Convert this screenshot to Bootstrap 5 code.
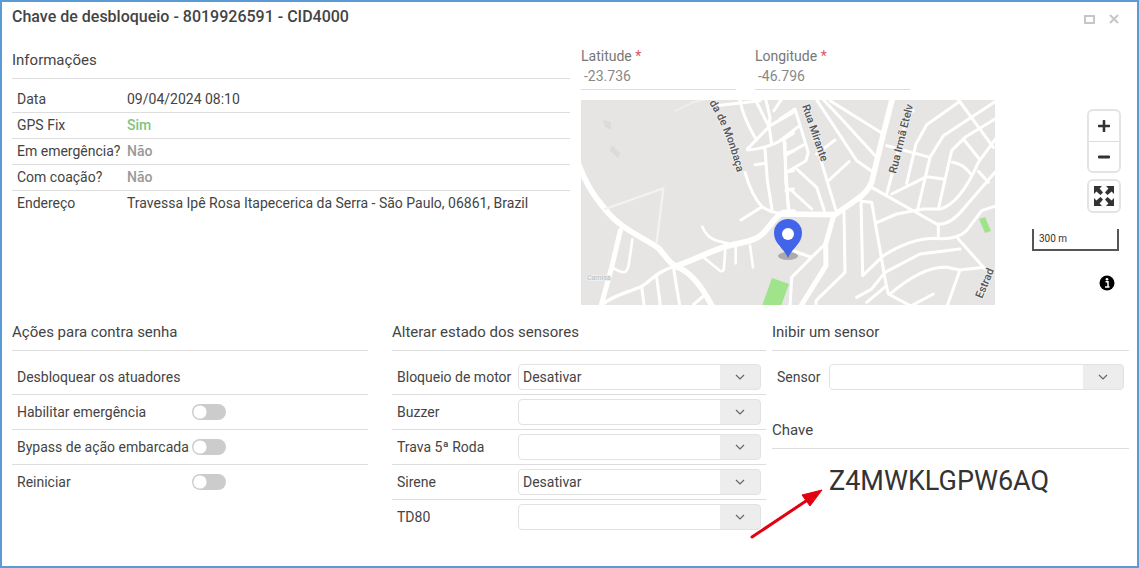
<!DOCTYPE html>
<html lang="pt-BR">
<head>
<meta charset="utf-8">
<meta name="viewport" content="width=device-width, initial-scale=1">
<title>Chave de desbloqueio</title>
<link href="https://cdn.jsdelivr.net/npm/bootstrap@5.3.0/dist/css/bootstrap.min.css" rel="stylesheet">
<style>
  body { font: 14px/20px Roboto, "Liberation Sans", sans-serif; color: #444; background: #fff; }
  .window { border: 2px solid #5b9bd5; padding: 0 8px 16px 10px; min-height: 100vh; }
  .window-title { font-size: 16px; line-height: 30px; font-weight: 500; color: #444; }
  .window-tools { gap: 13px; padding: 3px 10px 0 0; }
  .window-tools button { width: 11px; height: 28px; color: #c6c6c6; }
  .plain-btn { border: 0; padding: 0; background: none; display: flex; align-items: center; justify-content: center; }
  .top-area { display: grid; grid-template-columns: 569fr 548fr; min-height: 289px; }
  .bottom-area { display: grid; grid-template-columns: 380fr 380fr 357fr; }
  .col-actions { padding-right: 24px; }
  .col-sensors { padding-right: 6px; }
  .section-title { font-size: 15px; line-height: 20px; font-weight: 400; color: #444; margin: 0; padding-bottom: 8px; border-bottom: 1px solid #ddd; }
  .info-area { padding: 17px 11px 0 0; }
  .info-table { width: 100%; margin-top: 8px; }
  .info-table th { width: 115px; font-weight: 400; padding: 2px 0 3px 5px; white-space: nowrap; }
  .info-table td { padding: 2px 0 3px; }
  .info-table tr + tr { border-top: 1px solid #ddd; }
  .flag-text { font-weight: 500; color: #999; }
  .flag-on { color: #7cc47f; }
  .coord-fields { gap: 19px; padding-top: 13px; }
  .coord-field { width: 155px; }
  .coord-field label { display: block; color: #777; line-height: 20px; }
  .coord-field input { width: 100%; height: 24px; border: 0; border-bottom: 1px solid #ddd; padding: 0 3px 3px; color: #888; background: none; border-radius: 0; }
  .required-mark { color: #d9536a; }
  .map-row { margin-top: 10px; }
  .map-view { flex: 1 1 0; min-width: 0; height: 205px; display: block; background: #e6e5e3; }
  .map-tools { width: 134px; padding: 9px 8px 0 0; }
  .tool-group { width: 34px; border: 2px solid #e4e4e4; border-radius: 6px; overflow: hidden; margin-bottom: 6px; }
  .tool-group button { width: 30px; height: 30px; color: #333; }
  .tool-group button + button { border-top: 1px solid #ddd; }
  .scale-bar { width: 87px; height: 22px; border: 2px solid #555; border-top: 0; font-size: 10px; line-height: 20px; padding-left: 5px; margin: 10px 2px 24px 0; color: #333; }
  .info-btn { margin-right: 6px; color: #000; }
  .form-line { display: flex; align-items: center; height: 35px; padding: 0 5px; }
  .form-line + .form-line { border-top: 1px solid #ddd; }
  .form-lines { padding-top: 8px; }
  .actions-label { width: 175px; }
  .sensors-label { width: 121px; }
  .sensor-label { width: 52px; }
  .form-switch .toggle { width: 34px; height: 16px; margin: 0; border: 0; background-color: #ccc; display: block; cursor: pointer;
    --bs-form-switch-bg: url("data:image/svg+xml,%3csvg xmlns='http://www.w3.org/2000/svg' viewBox='-4 -4 8 8'%3e%3ccircle r='3.3' fill='%23fff'/%3e%3c/svg%3e"); }
  .picker.form-select { flex: 1 1 0; min-width: 0; height: 26px; border: 1px solid #e2e2e2; border-radius: 4px; padding: 0 44px 0 4px; font-size: 14px; line-height: 20px; color: #444;
    background-image: url("data:image/svg+xml,%3csvg xmlns='http://www.w3.org/2000/svg' viewBox='0 0 10 6'%3e%3cpath d='M1 1l4 4 4-4' fill='none' stroke='%23666' stroke-width='1.2'/%3e%3c/svg%3e"), linear-gradient(#ededed, #ededed);
    background-size: 10px 6px, 40px 100%; background-position: right 15px center, right center; background-repeat: no-repeat; }
  .key-title { margin-top: 26px; }
  .key-line { position: relative; padding: 14px 0 0 57px; }
  .key-value { font-size: 27px; line-height: 36px; color: #333; }
  .key-arrow { position: absolute; left: -23px; top: 38px; }
</style>
</head>
<body>
<main class="window">
  <header class="d-flex justify-content-between">
    <h1 class="window-title mb-0">Chave de desbloqueio - 8019926591 - CID4000</h1>
    <div class="window-tools d-flex">
      <button type="button" class="plain-btn" aria-label="Maximizar"><svg width="11" height="9" viewBox="0 0 11 9"><path d="M1 1h9v7H1z" fill="none" stroke="currentColor" stroke-width="2"/></svg></button>
      <button type="button" class="plain-btn" aria-label="Fechar"><svg width="10" height="10" viewBox="0 0 10 10"><path d="M1 1l8 8M9 1L1 9" stroke="currentColor" stroke-width="2"/></svg></button>
    </div>
  </header>

  <div class="top-area">
    <section class="info-area">
      <h2 class="section-title">Informações</h2>
      <table class="info-table">
        <tbody>
          <tr><th scope="row">Data</th><td>09/04/2024 08:10</td></tr>
          <tr><th scope="row">GPS Fix</th><td><span class="flag-text flag-on">Sim</span></td></tr>
          <tr><th scope="row">Em emergência?</th><td><span class="flag-text">Não</span></td></tr>
          <tr><th scope="row">Com coação?</th><td><span class="flag-text">Não</span></td></tr>
          <tr><th scope="row">Endereço</th><td>Travessa Ipê Rosa Itapecerica da Serra - São Paulo, 06861, Brazil</td></tr>
        </tbody>
      </table>
    </section>

    <section>
      <div class="coord-fields d-flex">
        <div class="coord-field"><label for="lat">Latitude <span class="required-mark">*</span></label><input id="lat" type="text" value="-23.736" readonly></div>
        <div class="coord-field"><label for="lng">Longitude <span class="required-mark">*</span></label><input id="lng" type="text" value="-46.796" readonly></div>
      </div>
      <div class="map-row d-flex">
        <svg class="map-view" viewBox="0 0 414 205" preserveAspectRatio="xMidYMid slice" role="img" aria-label="Mapa">
          <rect width="414" height="205" fill="#e6e5e3"/>
          <path d="M22 20l8 2 0 8-6-3zM31 45l8 8-2 5-8-7z" fill="#dddad8"/>
          <!-- west half -->
          <g transform="translate(-11 -6) scale(.33333)" fill="none" stroke="#fff" stroke-width="9" stroke-linejoin="round" stroke-linecap="round">
            <path d="M20 195C40 255 65 300 105 345C150 405 220 430 265 462C290 490 295 505 318 518C360 530 395 575 428 640" stroke-width="17"/>
            <path d="M318 516C370 500 410 475 470 457C510 445 550 445 575 422C600 400 610 370 640 356L670 354" stroke-width="17"/>
            <path d="M151 410L125 520L92 640" stroke-width="15"/>
            <path d="M318 516C260 530 240 565 212 578C160 600 130 605 95 632" stroke-width="10"/>
            <path d="M187 436L178 500Q174 540 155 534Q138 528 130 522M397 398Q410 430 440 440L480 450M403 492L450 530Q462 535 462 520L466 465M497 460V508M540 455L549 520" stroke-width="8"/>
            <path d="M215 578L223 640M260 550L272 640M311 525L330 640M370 632L408 600" stroke-width="9"/>
            <path d="M105 345L280 283L260 445" stroke="#f3f2f0" stroke-width="7"/>
            <path d="M315 50L370 25L410 15" stroke="#f0efed" stroke-width="5"/>
            <path d="M525 235C535 270 550 310 576 338Q600 355 640 360M513 378L576 338"/>
            <path d="M510 20Q520 70 552 125L560 138M430 36L505 28L570 20M555 15L598 100L605 150M587 15L600 70L596 105M612 50L635 15M670 55L600 95L532 165M532 168Q600 165 670 118M585 165L592 260L606 345M555 212L585 208M645 145L647 260L657 350M645 178L670 172M648 235L670 230M648 290L670 285"/>
          </g>
          <!-- east half -->
          <g transform="translate(199 -6) scale(.33333)" fill="none" stroke="#fff" stroke-width="9" stroke-linejoin="round" stroke-linecap="round">
            <path d="M0 360L165 362L232 315Q262 295 275 265L305 140L338 10" stroke-width="17"/>
            <path d="M162 362L137 450L138 515L60 640" stroke-width="15"/>
            <path d="M0 75L45 45L85 175L78 200L20 235M0 140L20 125L55 98M12 135L25 345M15 185L75 150M50 225L110 280L133 350M30 285L95 345"/>
            <path d="M105 10L230 200L280 235M128 15L180 70L290 190M150 20L310 120M110 180L165 138M148 258L207 203M120 190L168 350"/>
            <path d="M50 475L95 490L0 455M137 448L35 550L30 640M192 355L195 535L108 620V640"/>
            <path d="M243 318L248 545L310 485M243 322L275 325L318 570L325 600L400 640M275 280L470 390Q510 395 550 345L645 235M292 385L350 360L430 345H480Q540 330 595 205L650 130"/>
            <path d="M320 155L450 190L412 350M450 190L490 125L650 20M320 300L335 245L382 65L400 50M335 300L440 248L490 255M380 268L408 150L440 92L540 22M475 345L515 170L555 130L645 75M550 135L598 195M518 205Q550 210 572 240M595 232L625 265M530 10L640 160"/>
            <path d="M230 610L275 585L315 535L420 480L540 465M310 485Q390 435 460 433Q530 440 560 410L605 350L650 335M535 435L615 525M475 390V430M260 625L320 575M330 600Q430 515 500 520L540 528L610 520M540 528L500 640M385 640L460 600"/>
          </g>
          <path d="M191 178l17 6-8 22h-19z" fill="#9fe38b"/>
          <path d="M398 119l6-2 6 14-6 2z" fill="#9fe38b"/>
          <path id="street" d="M128 3Q146 30 158 80" fill="none"/>
          <g font-family="Roboto, sans-serif" fill="#555" stroke="#eee" stroke-width="2" paint-order="stroke" font-size="11" font-weight="500">
            <text><textPath href="#street">da de Monbaça</textPath></text>
            <text transform="translate(221 6) rotate(71)">Rua Mirante</text>
            <text transform="translate(315 74) rotate(-76)">Rua Irmã Etelv</text>
            <text transform="translate(401 199) rotate(-67)">Estrad</text>
            <text x="6" y="180" font-size="7" font-weight="400" fill="#bbb">Camisa</text>
          </g>
          <ellipse cx="207" cy="156" rx="10" ry="4" fill="#555" opacity=".4"/>
          <path d="M207 158C203 148 193 144 193 133a14 14 0 0 1 28 0C221 144 211 148 207 158z" fill="#4264e8"/>
          <circle cx="207" cy="134" r="6" fill="#fff"/>
        </svg>
        <div class="map-tools d-flex flex-column align-items-end">
          <div class="tool-group">
            <button type="button" class="plain-btn" aria-label="Aproximar"><svg width="12" height="12" viewBox="0 0 12 12"><path d="M6 1v10M1 6h10" stroke="currentColor" stroke-width="2.6" stroke-linecap="round"/></svg></button>
            <button type="button" class="plain-btn" aria-label="Afastar"><svg width="12" height="12" viewBox="0 0 12 12"><path d="M1 6h10" stroke="currentColor" stroke-width="2.8" stroke-linecap="round"/></svg></button>
          </div>
          <div class="tool-group">
            <button type="button" class="plain-btn" aria-label="Tela cheia"><svg width="20" height="20" viewBox="0 0 20 20" fill="currentColor"><path id="corner" d="M0 0h8L5.600 2.400 9 6.500 6.500 9 2.400 5.600 0 8z"/><use href="#corner" transform="rotate(90 10 10)"/><use href="#corner" transform="rotate(180 10 10)"/><use href="#corner" transform="rotate(270 10 10)"/></svg></button>
          </div>
          <div class="scale-bar">300 m</div>
          <button type="button" class="plain-btn info-btn" aria-label="Informações do mapa"><svg width="16" height="16" viewBox="0 0 16 16"><circle cx="8" cy="8" r="7.500" fill="currentColor"/><path d="M6.500 6.800h2.500v5M6 12h4.500" fill="none" stroke="#fff" stroke-width="1.500"/><circle cx="8" cy="4.200" r="1.300" fill="#fff"/></svg></button>
        </div>
      </div>
    </section>
  </div>

  <div class="bottom-area">
    <section class="col-actions">
      <h2 class="section-title">Ações para contra senha</h2>
      <div class="form-lines">
        <div class="form-line">Desbloquear os atuadores</div>
        <div class="form-line"><label class="actions-label" for="a1">Habilitar emergência</label><div class="form-switch p-0 m-0"><input class="form-check-input toggle" type="checkbox" role="switch" id="a1"></div></div>
        <div class="form-line"><label class="actions-label" for="a2">Bypass de ação embarcada</label><div class="form-switch p-0 m-0"><input class="form-check-input toggle" type="checkbox" role="switch" id="a2"></div></div>
        <div class="form-line"><label class="actions-label" for="a3">Reiniciar</label><div class="form-switch p-0 m-0"><input class="form-check-input toggle" type="checkbox" role="switch" id="a3"></div></div>
      </div>
    </section>

    <section class="col-sensors">
      <h2 class="section-title">Alterar estado dos sensores</h2>
      <div class="form-lines">
        <div class="form-line"><label class="sensors-label" for="s1">Bloqueio de motor</label><select class="form-select picker" id="s1"><option>Desativar</option></select></div>
        <div class="form-line"><label class="sensors-label" for="s2">Buzzer</label><select class="form-select picker" id="s2"><option></option></select></div>
        <div class="form-line"><label class="sensors-label" for="s3">Trava 5ª Roda</label><select class="form-select picker" id="s3"><option></option></select></div>
        <div class="form-line"><label class="sensors-label" for="s4">Sirene</label><select class="form-select picker" id="s4"><option>Desativar</option></select></div>
        <div class="form-line"><label class="sensors-label" for="s5">TD80</label><select class="form-select picker" id="s5"><option></option></select></div>
      </div>
    </section>

    <section>
      <h2 class="section-title">Inibir um sensor</h2>
      <div class="form-lines">
        <div class="form-line"><label class="sensor-label" for="s6">Sensor</label><select class="form-select picker" id="s6"><option></option></select></div>
      </div>
      <h2 class="section-title key-title">Chave</h2>
      <div class="key-line">
        <output class="key-value">Z4MWKLGPW6AQ</output>
        <svg class="key-arrow" width="76" height="54" viewBox="0 0 76 54"><path d="M3 50L60 12" stroke="#e3000f" stroke-width="3" stroke-linecap="round"/><path d="M73 3L53 8 61 19z" fill="#e3000f" stroke="#e3000f"/></svg>
      </div>
    </section>
  </div>
</main>
<script src="https://cdn.jsdelivr.net/npm/bootstrap@5.3.0/dist/js/bootstrap.bundle.min.js"></script>
</body>
</html>
